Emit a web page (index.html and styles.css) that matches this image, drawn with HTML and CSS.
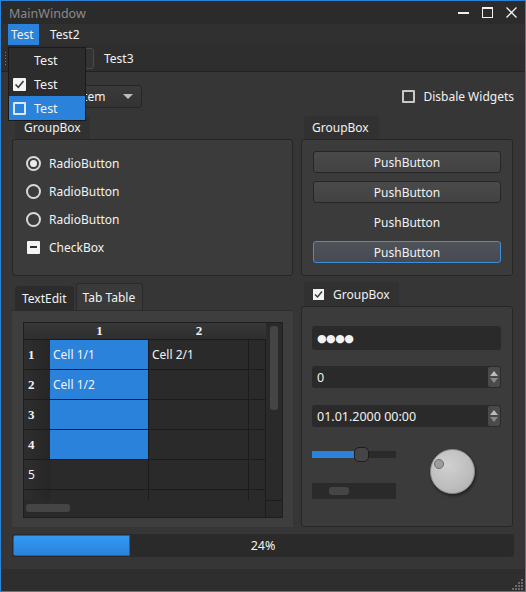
FILE: index.html
```html
<!DOCTYPE html>
<html>
<head>
<meta charset="utf-8">
<title>MainWindow</title>
<link rel="stylesheet" href="styles.css">
</head>
<body>
<div class="window">
  <div class="titlebar">
    <span class="title">MainWindow</span>
    <div class="wctl">
      <svg class="wbtn" width="14" height="14" viewBox="0 0 14 14"><rect x="1" y="6" width="11" height="2" fill="#f0f0f0"/></svg>
      <svg class="wbtn" width="14" height="14" viewBox="0 0 14 14"><rect x="1.5" y="1.5" width="10" height="10" fill="none" stroke="#f0f0f0" stroke-width="1"/><rect x="1" y="1" width="11" height="2" fill="#f0f0f0"/></svg>
      <svg class="wbtn" width="14" height="14" viewBox="0 0 14 14"><path d="M1.5 1.5 L11.5 11.5 M11.5 1.5 L1.5 11.5" stroke="#f0f0f0" stroke-width="1.3" fill="none"/></svg>
    </div>
  </div>
  <div class="menubar">
    <span class="menu active">Test</span>
    <span class="menu">Test2</span>
  </div>
  <div class="toolbar">
    <span class="handle"></span>
    <span class="tbtn t1"></span>
    <span class="tbtn t2 checked"></span>
    <span class="tbtn t3">Test3</span>
  </div>
  <div class="central">
    <div class="row1">
      <div class="combo"><span>ComboBox Item</span><span class="caret"></span></div>
      <label class="check"><span class="cbox empty"></span>Disbale Widgets</label>
    </div>
    <div class="cols top">
      <div class="group left">
        <div class="gtitle">GroupBox</div>
        <div class="gframe radios">
          <div class="ritem"><span class="radio on"></span>RadioButton</div>
          <div class="ritem"><span class="radio"></span>RadioButton</div>
          <div class="ritem"><span class="radio"></span>RadioButton</div>
          <div class="ritem"><span class="cbox tri"></span>CheckBox</div>
        </div>
      </div>
      <div class="group right">
        <div class="gtitle">GroupBox</div>
        <div class="gframe buttons">
          <div class="pbtn">PushButton</div>
          <div class="pbtn">PushButton</div>
          <div class="pbtn flat">PushButton</div>
          <div class="pbtn focus">PushButton</div>
        </div>
      </div>
    </div>
    <div class="cols bottom">
      <div class="tabwidget">
        <div class="tabbar">
          <span class="tab">TextEdit</span>
          <span class="tab sel">Tab Table</span>
        </div>
        <div class="pane">
          <div class="table">
            <div class="tmain">
              <div class="tgrid">
                <div class="hc corner"></div><div class="hc b">1</div><div class="hc b">2</div><div class="hc"></div>
                <div class="vh b">1</div><div class="c s">Cell 1/1</div><div class="c">Cell 2/1</div><div class="c"></div>
                <div class="vh b">2</div><div class="c s">Cell 1/2</div><div class="c"></div><div class="c"></div>
                <div class="vh b">3</div><div class="c s"></div><div class="c"></div><div class="c"></div>
                <div class="vh b">4</div><div class="c s"></div><div class="c"></div><div class="c"></div>
                <div class="vh">5</div><div class="c"></div><div class="c"></div><div class="c"></div>
                <div class="vh"></div><div class="c"></div><div class="c"></div><div class="c"></div>
              </div>
              <div class="vscroll"><span class="vhandle"></span></div>
            </div>
            <div class="tfoot">
              <div class="hscroll"><span class="hhandle"></span></div>
              <div class="tcorner"></div>
            </div>
          </div>
        </div>
      </div>
      <div class="group right2">
        <div class="gtitle chk"><span class="cbox small on"><svg width="9" height="9" viewBox="0 0 9 9"><path d="M1 4.5 L3.5 7 L8 1.5" stroke="#333" stroke-width="1.4" fill="none"/></svg></span>GroupBox</div>
        <div class="gframe inputs">
          <div class="field pwd"><span class="dots">●●●●</span></div>
          <div class="field spin"><span>0</span><span class="arrows"><i class="up"></i><i class="dn"></i></span></div>
          <div class="field spin dt"><span>01.01.2000 00:00</span><span class="arrows"><i class="up"></i><i class="dn"></i></span></div>
          <div class="lower">
            <div class="lcol">
              <div class="slider"><span class="sfill"></span><span class="shandle"></span></div>
              <div class="hbar"><span class="hbhandle"></span></div>
            </div>
            <div class="dialwrap"><div class="dial"><span class="dot"></span></div></div>
          </div>
        </div>
      </div>
    </div>
    <div class="progress"><span class="chunk"></span><span class="ptext">24%</span></div>
  </div>
  <div class="statusbar">
    <svg class="grip" width="12" height="12" viewBox="0 0 12 12" fill="#6a6a6a">
      <rect x="9" y="1" width="2" height="2"/>
      <rect x="6" y="4" width="2" height="2"/><rect x="9" y="4" width="2" height="2"/>
      <rect x="3" y="7" width="2" height="2"/><rect x="6" y="7" width="2" height="2"/><rect x="9" y="7" width="2" height="2"/>
      <rect x="0" y="10" width="2" height="2"/><rect x="3" y="10" width="2" height="2"/><rect x="6" y="10" width="2" height="2"/><rect x="9" y="10" width="2" height="2"/>
    </svg>
  </div>
  <div class="popup">
    <div class="pitem"><span class="picon"></span>Test</div>
    <div class="pitem"><span class="picon"><span class="cbox mcheck"><svg width="11" height="11" viewBox="0 0 11 11"><path d="M1.5 5.5 L4.3 8.3 L9.5 2" stroke="#3a3a3a" stroke-width="1.6" fill="none"/></svg></span></span>Test</div>
    <div class="pitem hl"><span class="picon"><span class="cbox mempty"></span></span>Test</div>
  </div>
</div>
</body>
</html>
```
FILE: styles.css
```css
* { box-sizing: border-box; }
html, body { margin: 0; padding: 0; background: #353535; }
body { font-family: "Noto Sans", "DejaVu Sans", sans-serif; font-size: 12px; color: #f2f2f2; }

.window {
  position: relative;
  width: 526px; height: 592px;
  border: 1px solid #2a82da;
  display: flex; flex-direction: column;
  background: #363636;
  overflow: hidden;
}

.titlebar {
  height: 23px; flex: none;
  display: flex; align-items: center;
  background: #2b2b2b;
  padding: 1px 6px 0 8px;
}
.title { color: #8a8a8a; font-size: 12.5px; }
.wctl { margin-left: auto; display: flex; gap: 10px; align-items: center; }
.wbtn { display: block; }

.menubar {
  height: 21px; flex: none;
  display: flex; align-items: stretch;
  background: #303030;
  padding-left: 7px;
}
.menu { display: flex; align-items: center; padding: 0 4px 0 3px; margin-right: 7px; }
.menu.active { background: #2a82da; width: 31px; margin-right: 8px; }

.toolbar {
  height: 27px; flex: none;
  display: flex; align-items: center;
  background: #2e2e2e;
  border-bottom: 1px solid #222;
  padding-left: 3px;
}
.handle {
  width: 3px; height: 15px; margin-right: 3px;
  background-image: radial-gradient(circle, #777 0.8px, transparent 1px);
  background-size: 3px 3px;
}
.tbtn { display: flex; align-items: center; height: 21px; border: 1px solid transparent; border-radius: 3px; }
.tbtn.t1 { width: 48px; margin-right: 2px; }
.tbtn.t2 { width: 34px; }
.tbtn.t3 { padding-left: 9px; }
.tbtn.checked { border-color: #4a4a4a; background: #333; }

.central {
  flex: 1; min-height: 0;
  display: flex; flex-direction: column;
  padding: 13px 11px 12px 11px;
}

.row1 { display: flex; align-items: center; justify-content: space-between; height: 23px; flex: none; }
.combo {
  width: 130px; height: 23px;
  display: flex; align-items: center; justify-content: space-between;
  padding: 0 8px 0 1px;
  background: linear-gradient(#3a3a3a, #333);
  border: 1px solid #262626; border-radius: 3px;
}
.caret { width: 0; height: 0; border-left: 5px solid transparent; border-right: 5px solid transparent; border-top: 5px solid #bdbdbd; }
.check { display: flex; align-items: center; gap: 8px; }

.cbox { display: inline-block; width: 13px; height: 13px; flex: none; }
.cbox.empty { border: 2px solid #c8c8c8; border-radius: 1px; }
.cbox.tri { background: #f4f4f4; border-radius: 1px; position: relative; }
.cbox.tri::after { content: ""; position: absolute; left: 3px; right: 3px; top: 5px; height: 2px; background: #303030; }

.cols { display: flex; gap: 8px; flex: none; }
.cols.top { margin-top: 8px; height: 160px; }
.cols.bottom { margin-top: 6px; height: 245px; }

.group { display: flex; flex-direction: column; min-height: 0; }
.group.left { width: 281px; }
.group.right, .group.right2 { width: 212px; }
.gtitle {
  height: 23px; flex: none;
  align-self: flex-start;
  margin-left: 3px;
  padding: 0 9px 0 9px;
  display: flex; align-items: center;
  background: #313131;
  border-radius: 3px 3px 0 0;
}
.group.right .gtitle { padding: 0 10px 0 8px; }
.gframe {
  flex: 1; min-height: 0;
  background: #3b3b3b;
  border: 1px solid #262626;
  border-radius: 3px;
}

.radios { padding: 9px 0 0 13px; }
.ritem { height: 28px; display: flex; align-items: center; gap: 8px; }
.radio { width: 15px; height: 15px; border-radius: 50%; border: 2px solid #d8d8d8; flex: none; position: relative; }
.radio.on::after { content: ""; position: absolute; left: 2px; top: 2px; width: 7px; height: 7px; border-radius: 50%; background: #eaeaea; }
.ritem .cbox.tri { margin-left: 1px; margin-right: 1px; }

.buttons { padding: 11px 11px 0 11px; display: flex; flex-direction: column; gap: 8px; }
.pbtn {
  height: 22px; display: flex; align-items: center; justify-content: center;
  background: linear-gradient(#4a4a4a, #424242);
  border: 1px solid #262626; border-radius: 3px;
}
.pbtn.flat { background: none; border-color: transparent; }
.pbtn.focus { border-color: #3d8fe0; background: linear-gradient(#4e5259, #474a50); }

.tabwidget { width: 281px; display: flex; flex-direction: column; min-height: 0; }
.tabbar { height: 27px; flex: none; display: flex; align-items: flex-end; padding-left: 3px; gap: 2px; margin-top: 1px; }
.tab { height: 24px; display: flex; align-items: center; padding: 0 7px; background: #2c2c2c; border-radius: 3px 3px 0 0; }
.tab.sel { height: 27px; background: #3a3a3a; padding: 0 7px 0 6px; border: 1px solid #2a2a2a; border-bottom: none; }
.pane { flex: 1; min-height: 0; background: #3e3e3e; border-top: 1px solid #2c2c2c; padding: 11px 10px 9px 11px; display: flex; }

.table { flex: 1; min-height: 0; display: flex; flex-direction: column; background: #2a2a2a; border: 1px solid #1e1e1e; }
.tmain { flex: 1; min-height: 0; display: flex; overflow: hidden; }
.tgrid {
  width: 242px; flex: none;
  display: grid;
  grid-template-columns: 26px 99px 100px 17px;
  grid-template-rows: 17px repeat(6, 30px);
  overflow: hidden;
  align-self: flex-start;
}
.hc { background: linear-gradient(#383838, #2e2e2e); border-bottom: 1px solid #1c1c1c; display: flex; align-items: center; justify-content: center; font-family: "Liberation Serif", serif; font-size: 13px; }
.b { font-weight: bold; }
.vh { background: linear-gradient(90deg, #2e2e2e, #262626); border-bottom: 1px solid #1c1c1c; display: flex; align-items: center; padding-left: 4px; font-family: "Liberation Serif", serif; font-size: 13px; }
.vh:not(.b) { font-family: "Noto Sans", sans-serif; font-size: 12px; }
.c { border-right: 1px solid #1c1c1c; border-bottom: 1px solid #1c1c1c; display: flex; align-items: center; padding-left: 3px; }
.c.s { background: #2a82da; }
.vscroll { flex: 1; background: #2a2a2a; padding: 3px 4px 0 4px; }
.vhandle { display: block; width: 8px; height: 84px; background: #454545; border-radius: 3px; }
.tfoot { height: 17px; flex: none; display: flex; }
.hscroll { flex: 1; padding: 4px 0 0 2px; }
.hhandle { display: block; width: 44px; height: 8px; background: #454545; border-radius: 3px; }
.tcorner { width: 17px; border-left: 1px solid #1c1c1c; border-top: 1px solid #1c1c1c; }

.gtitle.chk { height: 24px; gap: 9px; padding: 0 9px 0 9px; }
.cbox.small { width: 11px; height: 11px; background: #f2f2f2; display: flex; align-items: center; justify-content: center; }
.inputs { padding: 19px 11px 0 10px; display: flex; flex-direction: column; }
.field { background: #2a2a2a; border-radius: 3px; display: flex; align-items: center; padding-left: 5px; flex: none; }
.pwd { height: 24px; }
.dots { font-size: 11px; letter-spacing: -0.5px; font-family: "DejaVu Sans", sans-serif; }
.spin { height: 22px; margin-top: 16px; justify-content: space-between; padding-right: 1px; }
.spin.dt { margin-top: 17px; }
.spin > span:first-child { font-size: 12.5px; }
.arrows { width: 12px; height: 20px; display: flex; flex-direction: column; background: #4a4a4a; border-radius: 2px; align-items: center; justify-content: center; gap: 2px; }
.arrows i { width: 0; height: 0; border-left: 4px solid transparent; border-right: 4px solid transparent; }
.arrows .up { border-bottom: 5px solid #bbb; }
.arrows .dn { border-top: 5px solid #888; }
.lower { display: flex; margin-top: 20px; }
.lcol { width: 84px; display: flex; flex-direction: column; }
.slider { position: relative; height: 16px; display: flex; align-items: center; }
.slider::before { content: ""; position: absolute; left: 0; right: 0; top: 4px; height: 7px; background: #2a2a2a; }
.sfill { position: absolute; left: 0; width: 44px; top: 4px; height: 7px; background: #2a82da; }
.shandle { position: absolute; left: 42px; top: 0; width: 15px; height: 15px; background: #454545; border: 1px solid #1c1c1c; border-radius: 5px; }
.hbar { margin-top: 20px; height: 16px; background: #2a2a2a; padding: 4px 0 0 17px; }
.hbhandle { display: block; width: 20px; height: 8px; background: #454545; border-radius: 3px; }
.dialwrap { flex: 1; display: flex; justify-content: center; }
.dial {
  width: 45px; height: 45px; border-radius: 50%; position: relative; margin-left: 7px; margin-top: 2px;
  background: radial-gradient(circle at 40% 35%, #d0d0d0, #bdbdbd 60%, #a9a9a9);
  border: 1px solid #8f8f8f;
  box-shadow: 1px 2px 3px rgba(0,0,0,0.45);
}
.dot { position: absolute; left: 3px; top: 9px; width: 10px; height: 10px; border-radius: 50%; background: #9c9c9c; border: 1px solid #6e6e6e; }

.progress {
  margin-top: 7px; height: 23px; flex: none;
  position: relative;
  background: #2a2a2a; border-radius: 3px;
  display: flex; align-items: center; justify-content: center;
}
.chunk { position: absolute; left: 1px; top: 1px; bottom: 1px; width: 117px; background: linear-gradient(#3399f2, #2a82da); border: 1px solid #1f5fa3; border-radius: 2px 0 0 2px; }
.ptext { position: relative; font-size: 12.5px; }

.statusbar { height: 22px; flex: none; background: #2e2e2e; position: relative; }
.grip { position: absolute; right: 1px; bottom: 1px; }

.popup {
  position: absolute; left: 7px; top: 46px;
  width: 78px;
  background: #2c2c2c;
  border: 1px solid #1a1a1a;
}
.pitem { height: 24px; display: flex; align-items: center; font-size: 12.5px; }
.pitem.hl { background: #2a82da; height: 24px; }
.picon { width: 25px; padding-left: 4px; display: flex; align-items: center; }
.cbox.mcheck { width: 13px; height: 13px; background: #f4f4f4; display: flex; align-items: center; justify-content: center; border-radius: 1px; }
.cbox.mempty { width: 13px; height: 13px; border: 2px solid #d8e8f8; border-radius: 1px; }
```
